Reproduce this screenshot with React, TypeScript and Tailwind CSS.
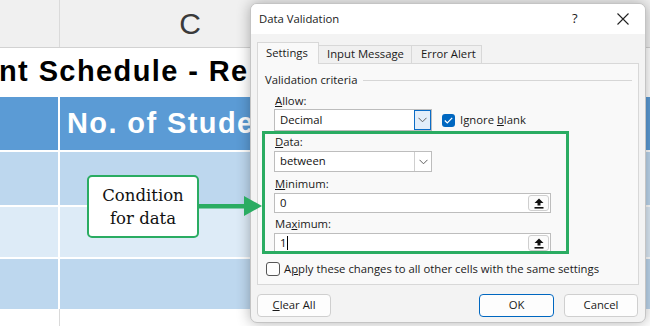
import React from "react";

const ui = { fontFamily: '"Open Sans", "Noto Sans", sans-serif' };

function Chevron({ color = "#606060" }: { color?: string }) {
  return (
    <svg width="9" height="6" viewBox="0 0 9 6">
      <path d="M0.5 0.8 L4.5 4.8 L8.5 0.8" fill="none" stroke={color} strokeWidth="1" />
    </svg>
  );
}

function RefIcon() {
  return (
    <svg width="10" height="11" viewBox="0 0 10 11">
      <path d="M5 0.5 L9.5 5 L6.5 5 L6.5 7.5 L3.5 7.5 L3.5 5 L0.5 5 Z" fill="#111" />
      <rect x="0.5" y="9" width="9" height="1.6" fill="#111" />
    </svg>
  );
}

function Select({ value, focused }: { value: string; focused?: boolean }) {
  return (
    <div className="flex w-[158px] h-full bg-white border border-[#bdbdbd]">
      <div className="flex-1 flex items-center pl-[5px] text-[11.3px] text-[#111]">{value}</div>
      <div
        className={
          focused
            ? "w-[17px] flex items-center justify-center border border-[#0b6cc6] bg-[#e3eefa]"
            : "w-[17px] flex items-center justify-center border-l border-[#cfcfcf] bg-white"
        }
      >
        <Chevron />
      </div>
    </div>
  );
}

function RefInput({ value, cursor }: { value: string; cursor?: boolean }) {
  return (
    <div className="flex w-[277px] h-full bg-white border border-[#bdbdbd]">
      <div className="flex-1 flex items-center pl-[5px] text-[11.3px] text-[#111]">
        {value}
        {cursor && <span className="inline-block w-[1px] h-[14px] bg-black ml-[1px]" />}
      </div>
      <div className="w-[21px] m-[1px] flex items-center justify-center border border-[#cfcfcf] rounded-[3px] bg-[#fbfbfb]">
        <RefIcon />
      </div>
    </div>
  );
}

function Label({ children }: { children: React.ReactNode }) {
  return <div className="h-[16px] leading-[16px] pl-[17px] text-[11.3px] text-[#1a1a1a]">{children}</div>;
}

const sheetFont = { fontFamily: '"Liberation Sans", sans-serif' };

export default function App() {
  return (
    <div className="relative w-[650px] h-[326px] overflow-hidden bg-white">
      {/* Spreadsheet */}
      <div className="flex flex-col">
        <div className="flex h-[48px] bg-[#f0f0f0] border-b border-[#d2d2d2]">
          <div className="w-[60px] border-r border-[#dadada]" />
          <div className="w-[260px] flex items-center justify-center text-[30px] text-[#3a3a3a]" style={sheetFont}>
            C
          </div>
        </div>
        <div
          className="h-[49px] flex items-center whitespace-nowrap text-[29px] font-bold text-black tracking-[1.4px]"
          style={sheetFont}
        >
          <span className="-ml-[1px] pb-[2px]">nt Schedule - Re</span>
        </div>
        <div className="flex h-[53px] bg-[#5b9bd5]">
          <div className="w-[60px] border-r-2 border-white" />
          <div
            className="flex items-center pl-[7px] whitespace-nowrap text-[29px] font-bold text-white tracking-[1.4px]"
            style={sheetFont}
          >
            No. of Stude
          </div>
        </div>
        <div className="flex h-[55px] bg-[#bdd7ee] border-t-2 border-white">
          <div className="w-[60px] border-r-2 border-white" />
        </div>
        <div className="flex h-[52px] bg-[#ddebf7] border-t-2 border-white">
          <div className="w-[60px] border-r-2 border-white" />
        </div>
        <div className="flex h-[52px] bg-[#bdd7ee] border-t-2 border-white">
          <div className="w-[60px] border-r-2 border-white" />
        </div>
        <div className="flex h-[20px] bg-white">
          <div className="w-[60px] border-r border-[#dadada]" />
        </div>
      </div>

      {/* Dialog */}
      <div
        className="absolute left-[250px] top-[3px] w-[396px] h-[320px] rounded-[7px] border border-[#c4c4c4] bg-[#f3f3f3] overflow-hidden flex flex-col shadow-[0_0_14px_rgba(0,0,0,0.3)]"
        style={ui}
      >
        <div className="h-[30px] bg-white flex items-center pl-[8px] text-[11.3px] text-[#1a1a1a] shrink-0">
          <span className="flex-1">Data Validation</span>
          <span className="w-[12px] text-[13px] mr-[33px]">?</span>
          <svg width="12" height="12" viewBox="0 0 12 12" className="mr-[16px]">
            <path d="M0.5 0.5 L11.5 11.5 M11.5 0.5 L0.5 11.5" stroke="#222" strokeWidth="1.1" />
          </svg>
        </div>
        {/* tabs */}
        <div className="flex items-end h-[29px] pl-[6px] shrink-0">
          <div className="w-[62px] h-[22px] bg-[#f9f9f9] border border-b-0 border-[#d8d8d8] flex items-center pl-[8px] text-[11.3px] text-[#1a1a1a] relative z-10 -mb-[1px]">
            Settings
          </div>
          <div className="w-[93px] h-[18px] bg-[#f0f0f0] border border-b-0 border-l-0 border-[#d8d8d8] flex items-center pl-[8px] text-[11.3px] text-[#1a1a1a]">
            Input Message
          </div>
          <div className="w-[70px] h-[18px] bg-[#f0f0f0] border border-b-0 border-l-0 border-[#d8d8d8] flex items-center pl-[9px] text-[11.3px] text-[#1a1a1a]">
            Error Alert
          </div>
        </div>
        {/* panel */}
        <div className="ml-[6px] w-[382px] h-[222px] bg-[#f9f9f9] border border-[#d8d8d8] pt-[8px] flex flex-col shrink-0">
          <div className="flex items-center h-[16px] pl-[7px] text-[11.3px] text-[#1a1a1a]">
            <span>Validation criteria</span>
            <div className="flex-1 h-px bg-[#d6d6d6] ml-[6px] mr-[6px]" />
          </div>
          <div className="mt-[5px]">
            <Label>
              <span className="underline">A</span>llow:
            </Label>
          </div>
          <div className="flex items-center h-[22px] pl-[16px]">
            <Select value="Decimal" focused />
            <div className="ml-[10px] w-[13px] h-[13px] rounded-[3px] bg-[#0067c0] flex items-center justify-center">
              <svg width="9" height="7" viewBox="0 0 9 7">
                <path d="M0.8 3.5 L3.3 6 L8.2 0.8" fill="none" stroke="white" strokeWidth="1.2" />
              </svg>
            </div>
            <span className="ml-[5px] text-[11.3px] text-[#1a1a1a]">
              Ignore <span className="underline">b</span>lank
            </span>
          </div>
          <div className="mt-[3px]">
            <Label>
              <span className="underline">D</span>ata:
            </Label>
          </div>
          <div className="mt-[1px] h-[21px] pl-[16px]">
            <Select value="between" />
          </div>
          <div className="mt-[4px]">
            <Label>
              <span className="underline">M</span>inimum:
            </Label>
          </div>
          <div className="mt-[1px] h-[20px] pl-[16px]">
            <RefInput value="0" />
          </div>
          <div className="mt-[3px]">
            <Label>
              Ma<span className="underline">x</span>imum:
            </Label>
          </div>
          <div className="mt-[1px] h-[20px] pl-[16px]">
            <RefInput value="1" cursor />
          </div>
          <div className="mt-[8px] h-[16px] flex items-center pl-[8px]">
            <div className="w-[14px] h-[14px] rounded-[3px] border border-[#555] bg-[#fdfdfd]" />
            <span className="ml-[4px] text-[11.3px] text-[#1a1a1a]">
              A<span className="underline">p</span>ply these changes to all other cells with the same settings
            </span>
          </div>
        </div>
        {/* buttons */}
        <div className="flex mt-[9px] pl-[6px] h-[23px] shrink-0">
          <div className="w-[74px] h-full rounded-[4px] border border-[#cfcfcf] bg-[#fdfdfd] flex items-center justify-center text-[11.3px] text-[#1a1a1a]">
            <span>
              <span className="underline">C</span>lear All
            </span>
          </div>
          <div className="flex-1" />
          <div className="w-[75px] h-full rounded-[4px] border border-[#0067c0] bg-[#fdfdfd] flex items-center justify-center text-[11.3px] text-[#1a1a1a]">
            OK
          </div>
          <div className="w-[74px] ml-[10px] mr-[7px] h-full rounded-[4px] border border-[#cfcfcf] bg-[#fdfdfd] flex items-center justify-center text-[11.3px] text-[#1a1a1a]">
            Cancel
          </div>
        </div>
      </div>

      {/* Green highlight box */}
      <div className="absolute left-[262px] top-[131px] w-[307px] h-[123px] border-[3px] border-[#2aac62]" />

      {/* Callout */}
      <div
        className="absolute left-[87px] top-[175px] w-[112px] h-[63px] rounded-[5px] border-2 border-[#2aac62] bg-white flex flex-col items-center justify-center text-[16.5px] leading-[23px] text-[#111]"
        style={{ fontFamily: '"DejaVu Serif", serif' }}
      >
        <span>Condition</span>
        <span>for data</span>
      </div>
      <svg className="absolute left-[198px] top-[194px]" width="66" height="24" viewBox="0 0 66 24">
        <rect x="0" y="10" width="48" height="4.5" fill="#2aac62" />
        <path d="M46 2 L64 12 L46 22 Z" fill="#2aac62" />
      </svg>
    </div>
  );
}
